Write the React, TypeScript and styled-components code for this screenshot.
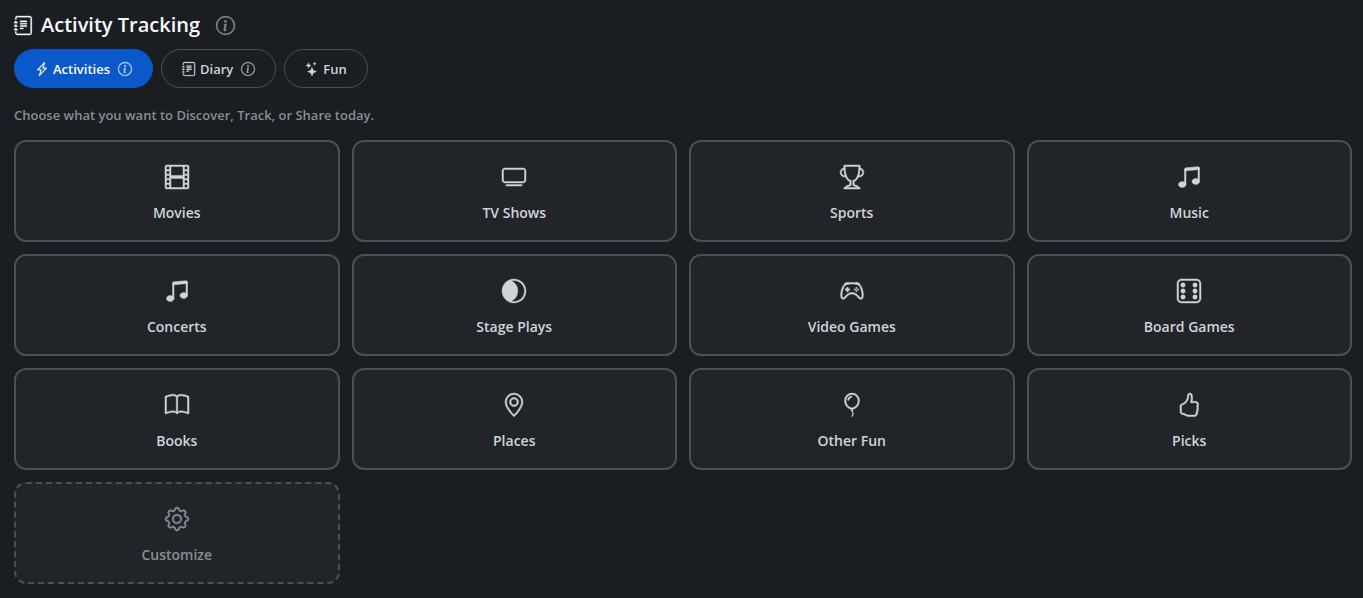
import React from "react";
import styled, { createGlobalStyle, css } from "styled-components";
import type { IconType } from "react-icons";
import {
  BsBalloon,
  BsBook,
  BsController,
  BsDice6,
  BsFilm,
  BsGear,
  BsGeoAlt,
  BsHandThumbsUp,
  BsInfoCircle,
  BsJournalText,
  BsLightningCharge,
  BsMask,
  BsMusicNoteBeamed,
  BsStars,
  BsTrophy,
  BsTv,
} from "react-icons/bs";

const GlobalStyle = createGlobalStyle`
  * { box-sizing: border-box; }
  body {
    margin: 0;
    background: #1a1d21;
    color: #dee2e6;
    font-family: "Segoe UI", "Open Sans", "Noto Sans", sans-serif;
    font-size: 14px;
  }
  svg { stroke-width: 0.3; overflow: visible; }
`;

const Page = styled.main`
  padding: 10px 11px 15px 14px;
`;

const Header = styled.header`
  display: flex;
  align-items: center;
  gap: 16px;
  height: 30px;
`;

const Title = styled.h1`
  display: flex;
  align-items: center;
  gap: 8px;
  margin: 0;
  color: #f8f9fa;
  font-size: 20px;
  font-weight: 600;
  line-height: 30px;

  svg { width: 19px; height: 19px; }
`;

const InfoButton = styled.button`
  display: flex;
  padding: 0;
  border: 0;
  background: none;
  color: #868e96;
  cursor: pointer;

  svg { width: 19px; height: 19px; }
`;

const Tabs = styled.nav`
  display: flex;
  gap: 8px;
  margin-top: 9px;
`;

const Tab = styled.button<{ $active?: boolean }>`
  display: flex;
  align-items: center;
  gap: 4px;
  height: 39px;
  padding: 0 20px;
  border: 1px solid ${(p) => (p.$active ? "#0a58ca" : "#495057")};
  border-radius: 20px;
  background: ${(p) => (p.$active ? "#0a58ca" : "transparent")};
  color: ${(p) => (p.$active ? "#ffffff" : "#ced4da")};
  font: inherit;
  font-size: 13px;
  font-weight: 600;
  cursor: pointer;

  svg { width: 14px; height: 14px; }
`;

const TabInfo = styled.span`
  display: flex;
  margin-left: 4px;
  opacity: 0.75;
`;

const Prompt = styled.p`
  margin: 17px 0 15px;
  color: #868e96;
  font-size: 13px;
  font-weight: 600;
  line-height: 20px;
`;

const Grid = styled.div`
  display: grid;
  grid-template-columns: repeat(4, minmax(0, 1fr));
  gap: 12px;
`;

const Card = styled.button<{ $dashed?: boolean }>`
  display: flex;
  flex-direction: column;
  align-items: center;
  gap: 13px;
  padding: 23px 12px 16px;
  border: 2px solid #495057;
  border-radius: 12px;
  background: #212529;
  color: #ced4da;
  font: inherit;
  font-size: 14px;
  font-weight: 600;
  line-height: 22px;
  cursor: pointer;

  svg { width: 24px; height: 24px; }

  ${(p) =>
    p.$dashed &&
    css`
      border-style: dashed;
      color: #868e96;
    `}
`;

const activities: { label: string; icon: IconType }[] = [
  { label: "Movies", icon: BsFilm },
  { label: "TV Shows", icon: BsTv },
  { label: "Sports", icon: BsTrophy },
  { label: "Music", icon: BsMusicNoteBeamed },
  { label: "Concerts", icon: BsMusicNoteBeamed },
  { label: "Stage Plays", icon: BsMask },
  { label: "Video Games", icon: BsController },
  { label: "Board Games", icon: BsDice6 },
  { label: "Books", icon: BsBook },
  { label: "Places", icon: BsGeoAlt },
  { label: "Other Fun", icon: BsBalloon },
  { label: "Picks", icon: BsHandThumbsUp },
];

export default function App() {
  return (
    <>
      <GlobalStyle />
      <Page>
        <Header>
          <Title>
            <BsJournalText />
            Activity Tracking
          </Title>
          <InfoButton aria-label="About activity tracking">
            <BsInfoCircle />
          </InfoButton>
        </Header>
        <Tabs>
          <Tab $active>
            <BsLightningCharge />
            Activities
            <TabInfo>
              <BsInfoCircle />
            </TabInfo>
          </Tab>
          <Tab>
            <BsJournalText />
            Diary
            <TabInfo>
              <BsInfoCircle />
            </TabInfo>
          </Tab>
          <Tab>
            <BsStars />
            Fun
          </Tab>
        </Tabs>
        <Prompt>Choose what you want to Discover, Track, or Share today.</Prompt>
        <Grid>
          {activities.map(({ label, icon: Icon }) => (
            <Card key={label}>
              <Icon />
              {label}
            </Card>
          ))}
          <Card $dashed>
            <BsGear />
            Customize
          </Card>
        </Grid>
      </Page>
    </>
  );
}
